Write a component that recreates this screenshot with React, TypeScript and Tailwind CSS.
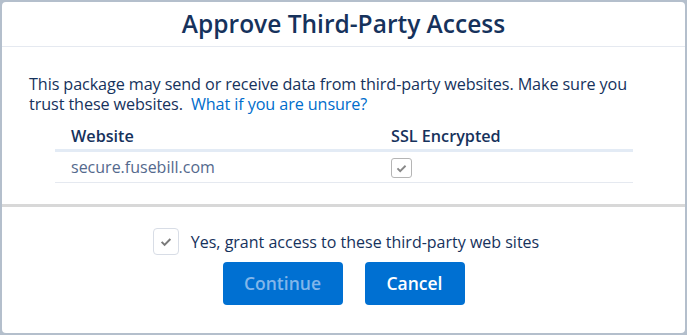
import React from "react";

const CheckIcon = ({ className }: { className?: string }) => (
  <svg viewBox="0 0 16 16" className={className} fill="currentColor">
    <path d="M2.2 8.6l1.6-1.6 2.6 2.6 5.8-5.8 1.6 1.6-7.4 7.4z" />
  </svg>
);

const App: React.FC = () => {
  return (
    <div className="w-[687px] h-[335px] bg-[#b4bfcc] p-[2px] font-['Open_Sans',sans-serif]">
      <div className="h-full bg-white rounded-[4px] flex flex-col text-[#16325c]">
        {/* header */}
        <div className="h-[45px] border-b border-[#e5e9f0] flex items-center justify-center">
          <h1 className="text-[24.5px] font-semibold leading-none pt-[1px]">Approve Third-Party Access</h1>
        </div>

        {/* body */}
        <div className="h-[157px] pl-[27px] pr-[40px] pt-[27px]">
          <p className="text-[16.2px] leading-[20px] tracking-[-0.1px]">
            This package may send or receive data from third-party websites. Make sure you trust these
            websites.<span className="ml-[8px] text-[#006dcc]">What if you are unsure?</span>
          </p>
          <div className="ml-[26px] mr-[12px] mt-[10px]">
            <div className="flex h-[28px] items-center border-b-[3px] border-[#e3ebf5] text-[16.2px] font-semibold">
              <div className="w-[320px] pl-[16px]">Website</div>
              <div className="pl-[16px]">SSL Encrypted</div>
            </div>
            <div className="flex h-[31px] items-center border-b border-[#e5e9f0] text-[16px] text-[#54698d]">
              <div className="w-[320px] pl-[16px]">secure.fusebill.com</div>
              <div className="pl-[16px] pt-[2px]">
                <div className="w-[21px] h-[20px] rounded-[3px] border border-[#b5b5b5] flex items-center justify-center text-[#888]">
                  <CheckIcon className="w-[13px] h-[13px]" />
                </div>
              </div>
            </div>
          </div>
        </div>

        <div className="h-[3px] bg-[#d8d8d8]" />

        {/* footer */}
        <div className="flex flex-col items-center pt-[21px]">
          <label className="flex items-center gap-[12px] text-[16px] pl-[5px]">
            <span className="w-[26px] h-[27px] rounded-[4px] border border-[#d8dde6] flex items-center justify-center text-[#7a7a7a]">
              <CheckIcon className="w-[14px] h-[14px]" />
            </span>
            Yes, grant access to these third-party web sites
          </label>
          <div className="flex gap-[22px] mt-[7px]">
            <button className="w-[120px] h-[43px] rounded-[4px] bg-[#0070d2] text-[#82b6ea] text-[17.5px] font-semibold">
              Continue
            </button>
            <button className="w-[100px] h-[43px] rounded-[4px] bg-[#0070d2] text-white text-[17.5px] font-semibold">
              Cancel
            </button>
          </div>
        </div>
      </div>
    </div>
  );
};

export default App;
